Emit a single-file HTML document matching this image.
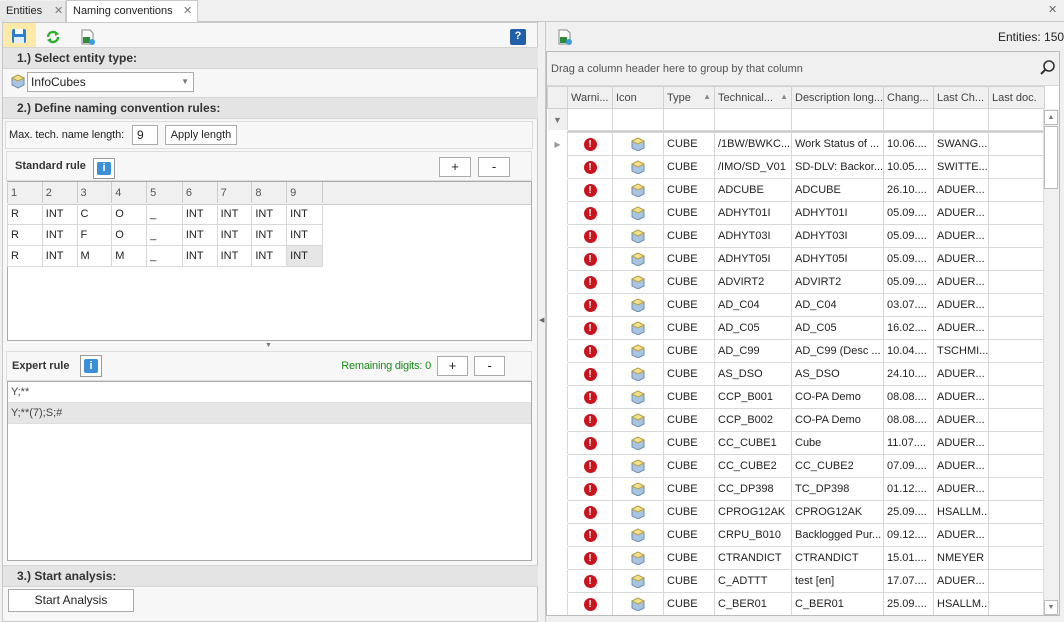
<!DOCTYPE html>
<html><head><meta charset="utf-8"><style>
*{box-sizing:border-box;margin:0;padding:0}
body{width:1064px;height:622px;overflow:hidden;background:#f0f0f0;font-family:"Liberation Sans",sans-serif;font-size:11px;color:#222;position:relative}
.a{position:absolute;white-space:nowrap}
.hdr{position:absolute;background:#e4e4e4;border-top:1px solid #d4d4d4;border-bottom:1px solid #d4d4d4;font-weight:bold;font-size:12px;color:#333;padding-left:14px;line-height:20px;white-space:nowrap}
.btn{position:absolute;background:#fff;border:1px solid #aaa;text-align:center;line-height:18px;font-size:11px;white-space:nowrap}
.g{position:absolute;border-collapse:collapse;table-layout:fixed;font-size:11px}
.g td{border:1px solid #d8d8d8;height:21px;padding:0 3px;white-space:nowrap;overflow:hidden}
.dg{position:absolute;left:547px;top:86px;border-collapse:collapse;table-layout:fixed}
.dg td{border:1px solid #d8d8d8;height:23px;padding:0 3px;white-space:nowrap;overflow:hidden;font-size:11px;background:#fff}
.dg td:first-child{border-left-color:#fff;border-top-color:#fff;border-bottom-color:#fff}
.dg tr.h td{background:#f0f0f0;height:22px;color:#444;border-color:#d0d0d0}
.dg tr.f td{height:22px}
.ex{display:inline-block;width:13px;height:13px;border-radius:50%;background:#c8141c;color:#fff;font-weight:bold;font-size:10px;text-align:center;line-height:13px;vertical-align:middle}
.cb{display:inline-block;width:14px;height:14px;vertical-align:middle}
</style></head><body>
<!-- tabs -->
<div class="a" style="left:0;top:0;width:1064px;height:22px;background:#f0f0f0;border-bottom:1px solid #c8c8c8"></div>
<div class="a" style="left:0;top:1px;width:66px;height:21px;background:#e8e8e8;border-right:1px solid #ccc;line-height:20px;padding-left:6px;font-size:11px">Entities<span style="position:absolute;left:54px;color:#777">✕</span></div>
<div class="a" style="left:66px;top:0;width:132px;height:23px;background:#fff;border:1px solid #c8c8c8;border-bottom:none;line-height:21px;padding-left:6px;font-size:11px">Naming conventions<span style="position:absolute;left:116px;color:#777">✕</span></div>
<div class="a" style="left:1048px;top:3px;color:#666;font-size:11px">✕</div>
<!-- left panel -->
<div class="a" style="left:2px;top:22px;width:536px;height:600px;border:1px solid #c8c8c8;background:#f7f7f7"></div>
<div class="a" style="left:3px;top:23px;width:33px;height:24px;background:#fdeaa8"></div>
<svg class="a" style="left:11px;top:28px" width="16" height="16"><rect x="1" y="1" width="14" height="14" rx="2" fill="#2a7fd0"/><rect x="4" y="1" width="8" height="5" fill="#fff"/><rect x="3" y="9" width="10" height="6" fill="#e0eefa"/></svg>
<svg class="a" style="left:45px;top:29px" width="16" height="16"><path d="M3 8a5 5 0 0 1 9-3" stroke="#2eae2e" stroke-width="2.4" fill="none"/><path d="M13 8a5 5 0 0 1-9 3" stroke="#2eae2e" stroke-width="2.4" fill="none"/><path d="M10 2l4 3-4 2z M6 14l-4-3 4-2z" fill="#2eae2e"/></svg>
<svg class="a" style="left:80px;top:29px" width="16" height="16"><path d="M2 1h8l3 3v11H2z" fill="#fff" stroke="#888"/><rect x="3" y="8" width="7" height="6" fill="#2e8b3a"/><circle cx="12" cy="13" r="3" fill="#3b9be0"/></svg>
<div class="a" style="left:510px;top:29px;width:16px;height:16px;background:#2160a8;border-radius:2px;color:#fff;font-weight:bold;text-align:center;line-height:15px;font-size:11px">?</div>
<div class="hdr" style="left:3px;top:47px;width:535px;height:22px">1.) Select entity type:</div>
<svg class="a" style="left:10px;top:73px" width="16" height="16"><path d="M2 5l6-3 6 3v7l-6 3-6-3z" fill="#a8c4e0" stroke="#6b8db0"/><path d="M2 5l6 3 6-3-6-3z" fill="#f2e08a" stroke="#b8a040"/></svg>
<div class="a" style="left:27px;top:72px;width:167px;height:20px;background:#fff;border:1px solid #aaa;line-height:18px;padding-left:3px;font-size:12px">InfoCubes<span style="position:absolute;right:4px;top:0;color:#777;font-size:8px">▼</span></div>
<div class="hdr" style="left:3px;top:97px;width:535px;height:22px">2.) Define naming convention rules:</div>
<div class="a" style="left:5px;top:121px;width:528px;height:28px;border:1px solid #ddd;background:#f7f7f7"></div>
<div class="a" style="left:9px;top:129px;font-size:11px;letter-spacing:-0.1px">Max. tech. name length:</div>
<div class="a" style="left:132px;top:125px;width:26px;height:20px;background:#fff;border:1px solid #aaa;line-height:18px;padding-left:4px;font-size:12px">9</div>
<div class="btn" style="left:165px;top:125px;width:72px;height:20px;font-size:11px">Apply length</div>
<!-- standard rule -->
<div class="a" style="left:6px;top:151px;width:526px;height:30px;background:#f7f7f7;border:1px solid #ddd"></div>
<div class="a" style="left:15px;top:160px;font-weight:bold;font-size:11px;color:#333">Standard rule</div>
<div class="a" style="left:93px;top:158px;width:22px;height:21px;border:1px solid #999;background:#fff"><div style="margin:3px;width:14px;height:13px;background:#3b8fd8;border-radius:2px;color:#fff;font-weight:bold;text-align:center;line-height:13px;font-size:11px">i</div></div>
<div class="btn" style="left:439px;top:157px;width:32px;height:20px;font-size:13px">+</div>
<div class="btn" style="left:478px;top:157px;width:32px;height:20px;font-size:13px">-</div>
<div class="a" style="left:7px;top:181px;width:525px;height:160px;background:#fff;border:1px solid #aaa"></div>
<div class="a" style="left:8px;top:182px;width:523px;height:23px;background:#f0f0f0;border-bottom:1px solid #ccc"></div>
<table class="g" style="left:7px;top:182px;width:316px">
<tr style="color:#555;background:#f0f0f0"><td style="width:34px;border-color:#f0f0f0 #ccc">1</td><td style="width:34px;border-color:#f0f0f0 #ccc">2</td><td style="width:34px;border-color:#f0f0f0 #ccc">3</td><td style="width:34px;border-color:#f0f0f0 #ccc">4</td><td style="width:35px;border-color:#f0f0f0 #ccc">5</td><td style="width:34px;border-color:#f0f0f0 #ccc">6</td><td style="width:34px;border-color:#f0f0f0 #ccc">7</td><td style="width:34px;border-color:#f0f0f0 #ccc">8</td><td style="width:35px;border-color:#f0f0f0 #ccc">9</td></tr>
<tr><td>R</td><td>INT</td><td>C</td><td>O</td><td>_</td><td>INT</td><td>INT</td><td>INT</td><td>INT</td></tr>
<tr><td>R</td><td>INT</td><td>F</td><td>O</td><td>_</td><td>INT</td><td>INT</td><td>INT</td><td>INT</td></tr>
<tr><td>R</td><td>INT</td><td>M</td><td>M</td><td>_</td><td>INT</td><td>INT</td><td>INT</td><td style="background:#e6e6e6">INT</td></tr>
</table>
<div class="a" style="left:265px;top:342px;color:#777;font-size:7px">▼</div>
<!-- expert -->
<div class="a" style="left:6px;top:351px;width:526px;height:30px;background:#f7f7f7;border:1px solid #ddd"></div>
<div class="a" style="left:12px;top:360px;font-weight:bold;font-size:11px;color:#333">Expert rule</div>
<div class="a" style="left:80px;top:355px;width:22px;height:22px;border:1px solid #999;background:#fff"><div style="margin:3px;width:14px;height:14px;background:#3b8fd8;border-radius:2px;color:#fff;font-weight:bold;text-align:center;line-height:14px;font-size:11px">i</div></div>
<div class="a" style="left:334px;top:360px;width:97px;text-align:right;color:#1a8a1a;font-size:11px;letter-spacing:-0.2px">Remaining digits: 0</div>
<div class="btn" style="left:437px;top:356px;width:31px;height:20px;font-size:13px">+</div>
<div class="btn" style="left:474px;top:356px;width:31px;height:20px;font-size:13px">-</div>
<div class="a" style="left:7px;top:381px;width:525px;height:180px;background:#fff;border:1px solid #aaa"></div>
<div class="a" style="left:8px;top:382px;width:523px;height:21px;border-bottom:1px solid #ddd;line-height:20px;padding-left:3px;color:#444">Y;**</div>
<div class="a" style="left:8px;top:403px;width:523px;height:21px;background:#e6e6e6;border-bottom:1px solid #ddd;line-height:20px;padding-left:3px;color:#444">Y;**(7);S;#</div>
<div class="hdr" style="left:3px;top:565px;width:535px;height:22px">3.) Start analysis:</div>
<div class="btn" style="left:8px;top:589px;width:126px;height:23px;line-height:21px;font-size:12px">Start Analysis</div>
<div class="a" style="left:539px;top:316px;color:#666;font-size:7px">◀</div>
<!-- right panel -->
<div class="a" style="left:545px;top:22px;width:519px;height:600px;border-left:1px solid #c8c8c8;background:#f0f0f0"></div>
<svg class="a" style="left:557px;top:29px" width="16" height="16"><path d="M2 1h8l3 3v11H2z" fill="#fff" stroke="#888"/><rect x="3" y="8" width="7" height="6" fill="#2e8b3a"/><circle cx="12" cy="13" r="3" fill="#3b9be0"/></svg>
<div class="a" style="left:998px;top:30px;font-size:12px">Entities: 150</div>
<div class="a" style="left:546px;top:51px;width:514px;height:570px;border:1px solid #bbb;background:#fff"></div>
<div class="a" style="left:547px;top:52px;width:512px;height:34px;background:#f0f0f0;border-bottom:1px solid #d8d8d8"></div>
<div class="a" style="left:551px;top:63px;color:#555;font-size:11px">Drag a column header here to group by that column</div>
<svg class="a" style="left:1040px;top:60px" width="16" height="16"><circle cx="9" cy="6" r="5" fill="none" stroke="#333" stroke-width="1.6"/><path d="M5.5 9.5L1 14" stroke="#333" stroke-width="2"/></svg>
<table class="dg" style="width:497px">
<colgroup><col style="width:20px"><col style="width:45px"><col style="width:51px"><col style="width:51px"><col style="width:77px"><col style="width:92px"><col style="width:50px"><col style="width:55px"><col style="width:56px"></colgroup>
<tr class="h"><td></td><td>Warni...</td><td>Icon</td><td>Type <span style="color:#888;font-size:8px;float:right">▲</span></td><td>Technical... <span style="color:#888;font-size:8px;float:right">▲</span></td><td>Description long...</td><td>Chang...</td><td>Last Ch...</td><td>Last doc.</td></tr>
<tr class="f"><td style="background:#f0f0f0;color:#777;text-align:center;font-size:9px">▼</td><td></td><td></td><td></td><td></td><td></td><td></td><td></td><td></td></tr>
</table>
<div class="a" style="left:567px;top:131px;width:477px;height:2px;background:#ccc"></div>
<table class="dg" style="width:497px;top:132px">
<colgroup><col style="width:20px"><col style="width:45px"><col style="width:51px"><col style="width:51px"><col style="width:77px"><col style="width:92px"><col style="width:50px"><col style="width:55px"><col style="width:56px"></colgroup>
<tr><td style="color:#999;font-size:8px;text-align:center">▶</td><td style="text-align:center"><span class="ex">!</span></td><td style="text-align:center"><svg class="cb"><path d="M1 4l6-3 6 3v7l-6 3-6-3z" fill="#a8c4e0" stroke="#6b8db0"/><path d="M1 4l6 3 6-3-6-3z" fill="#f2e08a" stroke="#b8a040"/></svg></td><td>CUBE</td><td>/1BW/BWKC...</td><td>Work Status of ...</td><td>10.06....</td><td>SWANG...</td><td></td></tr>
</table>
<table class="dg" style="width:497px;top:155px">
<colgroup><col style="width:20px"><col style="width:45px"><col style="width:51px"><col style="width:51px"><col style="width:77px"><col style="width:92px"><col style="width:50px"><col style="width:55px"><col style="width:56px"></colgroup>
<tr><td></td><td style="text-align:center"><span class="ex">!</span></td><td style="text-align:center"><svg class="cb"><path d="M1 4l6-3 6 3v7l-6 3-6-3z" fill="#a8c4e0" stroke="#6b8db0"/><path d="M1 4l6 3 6-3-6-3z" fill="#f2e08a" stroke="#b8a040"/></svg></td><td>CUBE</td><td>/IMO/SD_V01</td><td>SD-DLV: Backor...</td><td>10.05....</td><td>SWITTE...</td><td></td></tr>
<tr><td></td><td style="text-align:center"><span class="ex">!</span></td><td style="text-align:center"><svg class="cb"><path d="M1 4l6-3 6 3v7l-6 3-6-3z" fill="#a8c4e0" stroke="#6b8db0"/><path d="M1 4l6 3 6-3-6-3z" fill="#f2e08a" stroke="#b8a040"/></svg></td><td>CUBE</td><td>ADCUBE</td><td>ADCUBE</td><td>26.10....</td><td>ADUER...</td><td></td></tr>
<tr><td></td><td style="text-align:center"><span class="ex">!</span></td><td style="text-align:center"><svg class="cb"><path d="M1 4l6-3 6 3v7l-6 3-6-3z" fill="#a8c4e0" stroke="#6b8db0"/><path d="M1 4l6 3 6-3-6-3z" fill="#f2e08a" stroke="#b8a040"/></svg></td><td>CUBE</td><td>ADHYT01I</td><td>ADHYT01I</td><td>05.09....</td><td>ADUER...</td><td></td></tr>
<tr><td></td><td style="text-align:center"><span class="ex">!</span></td><td style="text-align:center"><svg class="cb"><path d="M1 4l6-3 6 3v7l-6 3-6-3z" fill="#a8c4e0" stroke="#6b8db0"/><path d="M1 4l6 3 6-3-6-3z" fill="#f2e08a" stroke="#b8a040"/></svg></td><td>CUBE</td><td>ADHYT03I</td><td>ADHYT03I</td><td>05.09....</td><td>ADUER...</td><td></td></tr>
<tr><td></td><td style="text-align:center"><span class="ex">!</span></td><td style="text-align:center"><svg class="cb"><path d="M1 4l6-3 6 3v7l-6 3-6-3z" fill="#a8c4e0" stroke="#6b8db0"/><path d="M1 4l6 3 6-3-6-3z" fill="#f2e08a" stroke="#b8a040"/></svg></td><td>CUBE</td><td>ADHYT05I</td><td>ADHYT05I</td><td>05.09....</td><td>ADUER...</td><td></td></tr>
<tr><td></td><td style="text-align:center"><span class="ex">!</span></td><td style="text-align:center"><svg class="cb"><path d="M1 4l6-3 6 3v7l-6 3-6-3z" fill="#a8c4e0" stroke="#6b8db0"/><path d="M1 4l6 3 6-3-6-3z" fill="#f2e08a" stroke="#b8a040"/></svg></td><td>CUBE</td><td>ADVIRT2</td><td>ADVIRT2</td><td>05.09....</td><td>ADUER...</td><td></td></tr>
<tr><td></td><td style="text-align:center"><span class="ex">!</span></td><td style="text-align:center"><svg class="cb"><path d="M1 4l6-3 6 3v7l-6 3-6-3z" fill="#a8c4e0" stroke="#6b8db0"/><path d="M1 4l6 3 6-3-6-3z" fill="#f2e08a" stroke="#b8a040"/></svg></td><td>CUBE</td><td>AD_C04</td><td>AD_C04</td><td>03.07....</td><td>ADUER...</td><td></td></tr>
<tr><td></td><td style="text-align:center"><span class="ex">!</span></td><td style="text-align:center"><svg class="cb"><path d="M1 4l6-3 6 3v7l-6 3-6-3z" fill="#a8c4e0" stroke="#6b8db0"/><path d="M1 4l6 3 6-3-6-3z" fill="#f2e08a" stroke="#b8a040"/></svg></td><td>CUBE</td><td>AD_C05</td><td>AD_C05</td><td>16.02....</td><td>ADUER...</td><td></td></tr>
<tr><td></td><td style="text-align:center"><span class="ex">!</span></td><td style="text-align:center"><svg class="cb"><path d="M1 4l6-3 6 3v7l-6 3-6-3z" fill="#a8c4e0" stroke="#6b8db0"/><path d="M1 4l6 3 6-3-6-3z" fill="#f2e08a" stroke="#b8a040"/></svg></td><td>CUBE</td><td>AD_C99</td><td>AD_C99 (Desc ...</td><td>10.04....</td><td>TSCHMI...</td><td></td></tr>
<tr><td></td><td style="text-align:center"><span class="ex">!</span></td><td style="text-align:center"><svg class="cb"><path d="M1 4l6-3 6 3v7l-6 3-6-3z" fill="#a8c4e0" stroke="#6b8db0"/><path d="M1 4l6 3 6-3-6-3z" fill="#f2e08a" stroke="#b8a040"/></svg></td><td>CUBE</td><td>AS_DSO</td><td>AS_DSO</td><td>24.10....</td><td>ADUER...</td><td></td></tr>
<tr><td></td><td style="text-align:center"><span class="ex">!</span></td><td style="text-align:center"><svg class="cb"><path d="M1 4l6-3 6 3v7l-6 3-6-3z" fill="#a8c4e0" stroke="#6b8db0"/><path d="M1 4l6 3 6-3-6-3z" fill="#f2e08a" stroke="#b8a040"/></svg></td><td>CUBE</td><td>CCP_B001</td><td>CO-PA Demo</td><td>08.08....</td><td>ADUER...</td><td></td></tr>
<tr><td></td><td style="text-align:center"><span class="ex">!</span></td><td style="text-align:center"><svg class="cb"><path d="M1 4l6-3 6 3v7l-6 3-6-3z" fill="#a8c4e0" stroke="#6b8db0"/><path d="M1 4l6 3 6-3-6-3z" fill="#f2e08a" stroke="#b8a040"/></svg></td><td>CUBE</td><td>CCP_B002</td><td>CO-PA Demo</td><td>08.08....</td><td>ADUER...</td><td></td></tr>
<tr><td></td><td style="text-align:center"><span class="ex">!</span></td><td style="text-align:center"><svg class="cb"><path d="M1 4l6-3 6 3v7l-6 3-6-3z" fill="#a8c4e0" stroke="#6b8db0"/><path d="M1 4l6 3 6-3-6-3z" fill="#f2e08a" stroke="#b8a040"/></svg></td><td>CUBE</td><td>CC_CUBE1</td><td>Cube</td><td>11.07....</td><td>ADUER...</td><td></td></tr>
<tr><td></td><td style="text-align:center"><span class="ex">!</span></td><td style="text-align:center"><svg class="cb"><path d="M1 4l6-3 6 3v7l-6 3-6-3z" fill="#a8c4e0" stroke="#6b8db0"/><path d="M1 4l6 3 6-3-6-3z" fill="#f2e08a" stroke="#b8a040"/></svg></td><td>CUBE</td><td>CC_CUBE2</td><td>CC_CUBE2</td><td>07.09....</td><td>ADUER...</td><td></td></tr>
<tr><td></td><td style="text-align:center"><span class="ex">!</span></td><td style="text-align:center"><svg class="cb"><path d="M1 4l6-3 6 3v7l-6 3-6-3z" fill="#a8c4e0" stroke="#6b8db0"/><path d="M1 4l6 3 6-3-6-3z" fill="#f2e08a" stroke="#b8a040"/></svg></td><td>CUBE</td><td>CC_DP398</td><td>TC_DP398</td><td>01.12....</td><td>ADUER...</td><td></td></tr>
<tr><td></td><td style="text-align:center"><span class="ex">!</span></td><td style="text-align:center"><svg class="cb"><path d="M1 4l6-3 6 3v7l-6 3-6-3z" fill="#a8c4e0" stroke="#6b8db0"/><path d="M1 4l6 3 6-3-6-3z" fill="#f2e08a" stroke="#b8a040"/></svg></td><td>CUBE</td><td>CPROG12AK</td><td>CPROG12AK</td><td>25.09....</td><td>HSALLM...</td><td></td></tr>
<tr><td></td><td style="text-align:center"><span class="ex">!</span></td><td style="text-align:center"><svg class="cb"><path d="M1 4l6-3 6 3v7l-6 3-6-3z" fill="#a8c4e0" stroke="#6b8db0"/><path d="M1 4l6 3 6-3-6-3z" fill="#f2e08a" stroke="#b8a040"/></svg></td><td>CUBE</td><td>CRPU_B010</td><td>Backlogged Pur...</td><td>09.12....</td><td>ADUER...</td><td></td></tr>
<tr><td></td><td style="text-align:center"><span class="ex">!</span></td><td style="text-align:center"><svg class="cb"><path d="M1 4l6-3 6 3v7l-6 3-6-3z" fill="#a8c4e0" stroke="#6b8db0"/><path d="M1 4l6 3 6-3-6-3z" fill="#f2e08a" stroke="#b8a040"/></svg></td><td>CUBE</td><td>CTRANDICT</td><td>CTRANDICT</td><td>15.01....</td><td>NMEYER</td><td></td></tr>
<tr><td></td><td style="text-align:center"><span class="ex">!</span></td><td style="text-align:center"><svg class="cb"><path d="M1 4l6-3 6 3v7l-6 3-6-3z" fill="#a8c4e0" stroke="#6b8db0"/><path d="M1 4l6 3 6-3-6-3z" fill="#f2e08a" stroke="#b8a040"/></svg></td><td>CUBE</td><td>C_ADTTT</td><td>test [en]</td><td>17.07....</td><td>ADUER...</td><td></td></tr>
<tr><td></td><td style="text-align:center"><span class="ex">!</span></td><td style="text-align:center"><svg class="cb"><path d="M1 4l6-3 6 3v7l-6 3-6-3z" fill="#a8c4e0" stroke="#6b8db0"/><path d="M1 4l6 3 6-3-6-3z" fill="#f2e08a" stroke="#b8a040"/></svg></td><td>CUBE</td><td>C_BER01</td><td>C_BER01</td><td>25.09....</td><td>HSALLM...</td><td></td></tr>
</table>
<div class="a" style="left:546px;top:615px;width:514px;height:7px;background:#f0f0f0;border-top:1px solid #bbb"></div>
<!-- scrollbar -->
<div class="a" style="left:1043px;top:109px;width:16px;height:506px;background:#f0f0f0;border-left:1px solid #ddd"></div>
<div class="a" style="left:1044px;top:110px;width:14px;height:15px;background:#fff;border:1px solid #bbb;color:#777;font-size:7px;text-align:center;line-height:13px">▲</div>
<div class="a" style="left:1044px;top:126px;width:14px;height:63px;background:#fff;border:1px solid #bbb"></div>
<div class="a" style="left:1044px;top:600px;width:14px;height:15px;background:#fff;border:1px solid #bbb;color:#777;font-size:7px;text-align:center;line-height:13px">▼</div>
</body></html>
